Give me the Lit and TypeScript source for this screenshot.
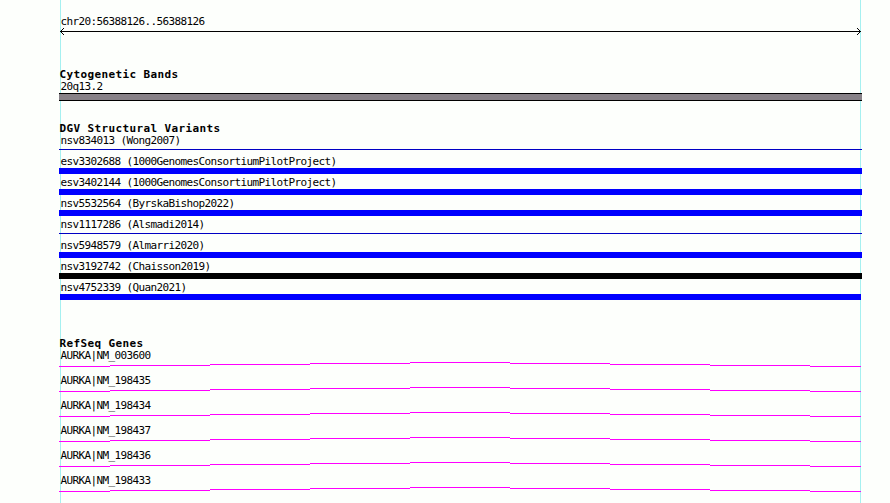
import { LitElement, html, css, svg } from "lit";
import { customElement } from "lit/decorators.js";
import { classMap } from "lit/directives/class-map.js";

interface Variant {
  label: string;
  kind: "thin" | "gain" | "mixed";
  inset?: boolean;
}

const VARIANTS: Variant[] = [
  { label: "nsv834013 (Wong2007)", kind: "thin" },
  { label: "esv3302688 (1000GenomesConsortiumPilotProject)", kind: "gain" },
  { label: "esv3402144 (1000GenomesConsortiumPilotProject)", kind: "gain" },
  { label: "nsv5532564 (ByrskaBishop2022)", kind: "gain" },
  { label: "nsv1117286 (Alsmadi2014)", kind: "thin" },
  { label: "nsv5948579 (Almarri2020)", kind: "gain" },
  { label: "nsv3192742 (Chaisson2019)", kind: "mixed" },
  { label: "nsv4752339 (Quan2021)", kind: "gain", inset: true },
];

const GENES = ["003600", "198435", "198434", "198437", "198436", "198433"];

// Stepped intron line: [start, end, row] within the gene strip.
const STEPS = [
  [0, 51, 4],
  [51, 151, 3],
  [151, 251, 2],
  [251, 351, 1],
  [351, 451, 0],
  [451, 551, 1],
  [551, 651, 2],
  [651, 751, 3],
  [751, 802, 4],
];

@customElement("app-root")
export class AppRoot extends LitElement {
  static styles = css`
    :host {
      display: block;
      height: 503px;
      overflow: hidden;
      background: #fdfffc;
      color: #000;
      font: 11px/13px "DejaVu Sans Mono", "Liberation Mono", monospace;
      letter-spacing: -0.622px;
    }
    .panel {
      box-sizing: border-box;
      width: 803px;
      height: 503px;
      margin-left: 59px;
      padding-top: 15px;
      background:
        linear-gradient(#a5f0f0, #a5f0f0) 1px 0 / 1px 100% no-repeat,
        linear-gradient(#a5f0f0, #a5f0f0) 801px 0 / 1px 100% no-repeat;
    }
    .label {
      height: 13px;
      padding-left: 1.5px;
      white-space: nowrap;
    }
    .title {
      height: 12px;
      line-height: 13px;
      padding-left: 0.5px;
      font-weight: bold;
      letter-spacing: 0.378px;
      white-space: nowrap;
    }
    svg {
      display: block;
    }
    .ruler {
      height: 53px;
    }
    .cyto {
      height: 54px;
    }
    .variants {
      height: 215px;
    }
    .band {
      box-sizing: border-box;
      height: 8px;
      background: #878187;
      border: solid #000;
      border-width: 1px 0;
    }
    .row {
      display: flow-root;
      height: 21px;
    }
    .bar {
      height: 6px;
    }
    .gain {
      background: #00f;
    }
    .mixed {
      background: #000;
    }
    .thin {
      height: 1px;
      margin-top: 2px;
      background: #0000c4;
    }
    .inset {
      margin: 0 1px;
    }
    .gene {
      height: 25px;
    }
  `;

  render() {
    return html`
      <main class="panel">
        <section class="ruler">
          <div class="label">chr20:56388126..56388126</div>
          <svg width="803" height="7" shape-rendering="crispEdges">
            <path d="M1 3.5H802" stroke="#000" />
            <path
              fill="#000"
              d="M2 2h1v1h-1zM3 1h1v1h-1zM4 0h1v1h-1zM2 4h1v1h-1zM3 5h1v1h-1zM4 6h1v1h-1zM800 2h1v1h-1zM799 1h1v1h-1zM798 0h1v1h-1zM800 4h1v1h-1zM799 5h1v1h-1zM798 6h1v1h-1z"
            />
          </svg>
        </section>
        <section class="cyto">
          <div class="title">Cytogenetic Bands</div>
          <div class="label">20q13.2</div>
          <div class="band"></div>
        </section>
        <section class="variants">
          <div class="title">DGV Structural Variants</div>
          ${VARIANTS.map(
            (v) => html`<div class="row">
              <div class="label">${v.label}</div>
              <div class=${classMap({ bar: true, [v.kind]: true, inset: !!v.inset })}></div>
            </div>`
          )}
        </section>
        <section>
          <div class="title">RefSeq Genes</div>
          ${GENES.map(
            (g) => html`<div class="gene">
              <div class="label">AURKA|NM_${g}</div>
              <svg width="802" height="5" shape-rendering="crispEdges">
                ${STEPS.map(([a, b, y]) => svg`<rect x=${a} y=${y} width=${b - a} height="1" fill="#f0f" />`)}
              </svg>
            </div>`
          )}
        </section>
      </main>
    `;
  }
}
